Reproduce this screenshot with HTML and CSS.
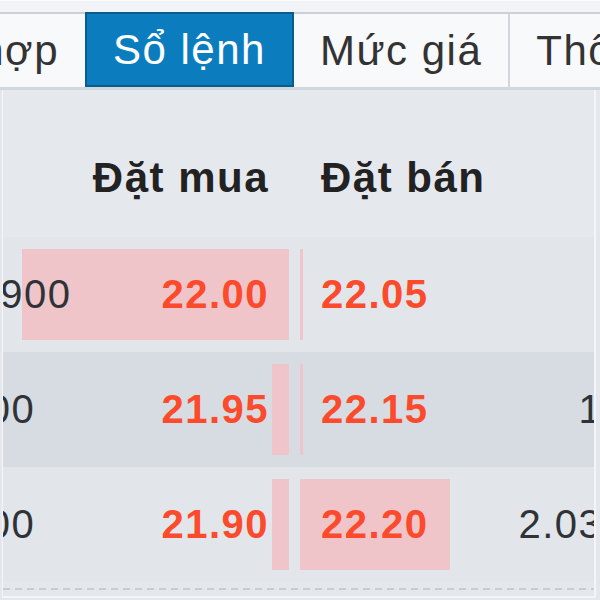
FILE: index.html
```html
<!DOCTYPE html>
<html lang="vi">
<head>
    <meta charset="UTF-8">
    <meta name="viewport" content="width=device-width, initial-scale=1.0">
    <title>Sổ lệnh</title>
    <link rel="stylesheet" href="styles.css">
</head>
<body>
    <div class="topbar"></div>

    <div class="tabs">
        <div class="tab tab-cut">Tổng hợp</div>
        <div class="tab active">Sổ lệnh</div>
        <div class="tab">Mức giá</div>
        <div class="tab">Thông tin</div>
    </div>

    <div class="book">
        <div class="book-head">
            <div class="side bid"><span class="label">Đặt mua</span></div>
            <div class="side ask"><span class="label">Đặt bán</span></div>
        </div>

        <div class="book-row">
            <div class="side bid" style="--bar: 267px"><span class="vol">1.900</span><span class="price">22.00</span></div>
            <div class="side ask" style="--bar: 3px"><span class="price">22.05</span><span class="vol"></span></div>
        </div>

        <div class="book-row dark">
            <div class="side bid" style="--bar: 17px"><span class="vol">500</span><span class="price">21.95</span></div>
            <div class="side ask" style="--bar: 3px"><span class="price">22.15</span><span class="vol">10</span></div>
        </div>

        <div class="book-row">
            <div class="side bid" style="--bar: 17px"><span class="vol">500</span><span class="price">21.90</span></div>
            <div class="side ask" style="--bar: 150px"><span class="price">22.20</span><span class="vol">2.030</span></div>
        </div>

        <div class="book-foot"></div>
    </div>
</body>
</html>
```

FILE: styles.css
```css
* {
    margin: 0;
    padding: 0;
    box-sizing: border-box;
}

body {
    font-family: 'Liberation Sans', Arial, sans-serif;
    font-size: 40px;
    letter-spacing: 1.5px;
    background: #e4e8ed;
    color: #2f3236;
    width: 600px;
    height: 600px;
    overflow: hidden;
}

.topbar {
    height: 12px;
    background: #f1f3f6;
    border-top: 1px solid #fbfcfd;
}

.tabs {
    display: flex;
    height: 78px;
    background: #f8f9fb;
    border-top: 2px solid #cbd0d6;
    border-bottom: 3px solid #d2d7dd;
    font-size: 42px;
}

.tab {
    display: flex;
    align-items: center;
    padding: 0 26px;
    white-space: nowrap;
    color: #333;
}

.tab-cut {
    flex: 0 0 85px;
    justify-content: flex-end;
    padding: 0 26px 0 0;
    overflow: hidden;
}

.tab.active {
    margin-top: -2px;
    background: #0b7dbf;
    border: 2px solid #0b5c8c;
    color: #fff;
}

.tab:nth-child(3) {
    border-right: 2px solid #d2d6dc;
}

.book {
    width: 594px;
    margin-left: 2px;
    border-left: 1px solid #f3f5f8;
    border-right: 2px solid #f3f5f8;
    border-bottom: 2px solid #f3f5f8;
    overflow: hidden;
}

.book-head,
.book-row {
    display: grid;
    grid-template-columns: 286px 294px;
    column-gap: 11px;
}

.book-head {
    height: 147px;
    align-items: end;
    padding-bottom: 35px;
    background: #e5e9ee;
}

.book-head .side {
    height: auto;
}

.label {
    font-size: 42px;
    font-weight: bold;
    color: #222;
}

.book-row {
    height: 115px;
    background: #e2e6eb;
}

.book-row.dark {
    background: #d7dce2;
}

.side {
    display: flex;
    align-items: center;
    justify-content: space-between;
    height: 100%;
    white-space: nowrap;
    background-image: linear-gradient(#efc5c9, #efc5c9);
    background-repeat: no-repeat;
    background-size: var(--bar, 0) 91px;
}

.bid {
    background-position: right center;
    padding-right: 20px;
}

.bid .label {
    margin-left: auto;
}

.ask {
    background-position: left center;
    padding-left: 21px;
}

.price {
    font-weight: bold;
    color: #fb4a2c;
}

.vol {
    color: #2f3236;
}

.bid .vol {
    margin-left: -39px;
}

.ask .vol {
    margin-right: -32px;
}

.book-foot {
    height: 14px;
    padding-top: 6px;
}

.book-foot::after {
    content: "";
    display: block;
    height: 2px;
    background: repeating-linear-gradient(90deg, #c7ccd3 0 7px, transparent 7px 12px);
}
```
